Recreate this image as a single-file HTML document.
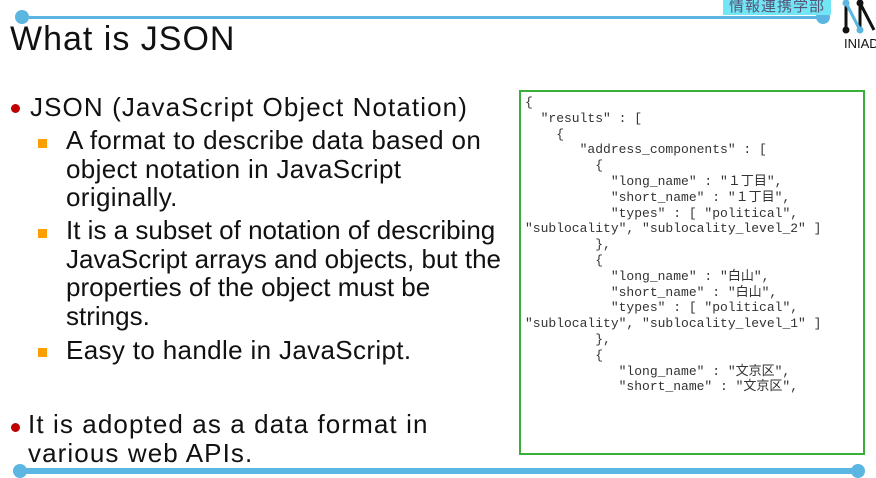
<!DOCTYPE html>
<html><head><meta charset="utf-8"><style>
body{margin:0;width:876px;height:474px;background:#fff;position:relative;overflow:hidden;font-family:"Liberation Sans","Noto Sans CJK JP",sans-serif;color:#111}
.a{position:absolute}
.t{font-size:26px;letter-spacing:1.1px;white-space:nowrap}
.s{letter-spacing:0.35px}
.rd{width:9px;height:9px;border-radius:50%;background:#c00000}
.sq{width:9px;height:9px;background:#ff9e00}
pre{margin:0;font-family:"Liberation Mono","Noto Sans CJK JP",monospace;font-size:13px;line-height:15.8px;color:#333}
</style></head><body>
<div class="a" style="left:22px;top:16px;width:800px;height:3px;background:#5bb6e2"></div>
<div class="a" style="left:15px;top:10px;width:14px;height:14px;border-radius:50%;background:#5bb6e2"></div>
<div class="a" style="left:816px;top:10px;width:14px;height:14px;border-radius:50%;background:#5bb6e2"></div>
<div class="a" style="left:723px;top:0;width:108px;height:15px;background:#72e6f5;color:#557;font-size:15px;line-height:14px;text-align:center;letter-spacing:1px">情報連携学部</div>
<svg class="a" style="left:840px;top:0" width="36" height="36" viewBox="0 0 36 36">
<path d="M6 3 V30 M20 30 V3 M20 3 L34 30" stroke="#111" stroke-width="3" fill="none"/>
<path d="M6 3 L20 30" stroke="#5bb6e2" stroke-width="3"/>
<circle cx="6" cy="3" r="3.5" fill="#5bb6e2"/><circle cx="20" cy="3" r="3.5" fill="#111"/>
<circle cx="6" cy="30" r="3.5" fill="#111"/><circle cx="20" cy="30" r="3.5" fill="#5bb6e2"/>
</svg>
<div class="a" style="left:844px;top:36px;font-size:13px;color:#111">INIAD</div>
<div class="a" style="left:10px;top:20px;font-size:34px;color:#111;letter-spacing:1px">What is JSON</div>

<div class="a rd" style="left:11px;top:104px"></div>
<div class="a t" style="left:30px;top:92px">JSON (JavaScript Object Notation)</div>
<div class="a sq" style="left:38px;top:139px"></div>
<div class="a t s" style="left:66px;top:126px;line-height:28.5px">A format to describe data based on<br>object notation in JavaScript<br>originally.</div>
<div class="a sq" style="left:38px;top:229px"></div>
<div class="a t s" style="left:66px;top:216px;line-height:28.5px;letter-spacing:0px">It is a subset of notation of describing<br>JavaScript arrays and objects, but the<br>properties of the object must be<br>strings.</div>
<div class="a sq" style="left:38px;top:348px"></div>
<div class="a t s" style="left:66px;top:335px">Easy to handle in JavaScript.</div>
<div class="a rd" style="left:11px;top:423px"></div>
<div class="a t" style="left:28px;top:410px;line-height:29px">It is adopted as a data format in<br>various web APIs.</div>

<div class="a" style="left:519px;top:90px;width:342px;height:361px;border:2px solid #3aae3a"></div>
<pre class="a" style="left:525px;top:95px">{
  "results" : [
    {
       "address_components" : [
         {
           "long_name" : "１丁目",
           "short_name" : "１丁目",
           "types" : [ "political",
"sublocality", "sublocality_level_2" ]
         },
         {
           "long_name" : "白山",
           "short_name" : "白山",
           "types" : [ "political",
"sublocality", "sublocality_level_1" ]
         },
         {
            "long_name" : "文京区",
            "short_name" : "文京区",</pre>

<div class="a" style="left:20px;top:468px;width:838px;height:6px;background:#5bb6e2"></div>
<div class="a" style="left:13px;top:464px;width:14px;height:14px;border-radius:50%;background:#5bb6e2"></div>
<div class="a" style="left:851px;top:464px;width:14px;height:14px;border-radius:50%;background:#5bb6e2"></div>
</body></html>
